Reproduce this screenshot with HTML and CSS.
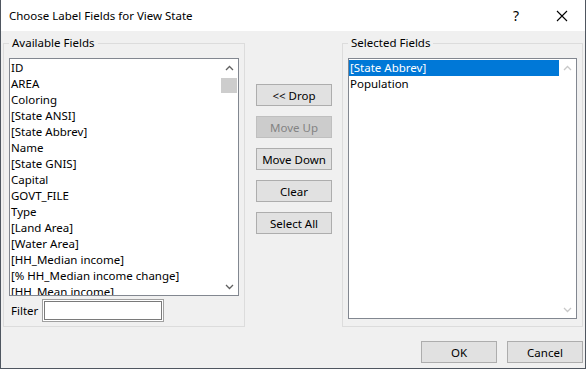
FILE: index.html
```html
<!DOCTYPE html>
<html lang="en">
<head>
    <meta charset="UTF-8">
    <title>Choose Label Fields for View State</title>
    <link rel="stylesheet" href="styles.css">
</head>
<body>
    <div class="dialog">
        <div class="titlebar">
            <span class="title">Choose Label Fields for View State</span>
            <span class="help">?</span>
            <span class="close">
                <svg width="12" height="12" viewBox="0 0 12 12"><path d="M1 1L11 11M11 1L1 11" stroke="#000" stroke-width="1.1" fill="none"/></svg>
            </span>
        </div>

        <div class="body">
            <div class="main">
                <!-- Available fields -->
                <fieldset class="group group-left">
                    <legend>Available Fields</legend>
                    <div class="listbox list-available">
                        <div class="items">
                            <div class="item">ID</div>
                            <div class="item">AREA</div>
                            <div class="item">Coloring</div>
                            <div class="item">[State ANSI]</div>
                            <div class="item">[State Abbrev]</div>
                            <div class="item">Name</div>
                            <div class="item">[State GNIS]</div>
                            <div class="item">Capital</div>
                            <div class="item">GOVT_FILE</div>
                            <div class="item">Type</div>
                            <div class="item">[Land Area]</div>
                            <div class="item">[Water Area]</div>
                            <div class="item">[HH_Median income]</div>
                            <div class="item">[% HH_Median income change]</div>
                            <div class="item">[HH_Mean income]</div>
                        </div>
                        <div class="scrollbar">
                            <div class="arrow"><svg width="9" height="6" viewBox="0 0 9 6"><path d="M1 5L4.5 1.5L8 5" stroke="#606060" stroke-width="1.3" fill="none"/></svg></div>
                            <div class="track"><div class="thumb"></div></div>
                            <div class="arrow"><svg width="9" height="6" viewBox="0 0 9 6"><path d="M1 1L4.5 4.5L8 1" stroke="#606060" stroke-width="1.3" fill="none"/></svg></div>
                        </div>
                    </div>
                    <div class="filter-row">
                        <span class="filter-label">Filter</span>
                        <div class="filter-input"></div>
                    </div>
                </fieldset>

                <!-- Move buttons -->
                <div class="actions">
                    <button class="btn">&lt;&lt; Drop</button>
                    <button class="btn" disabled>Move Up</button>
                    <button class="btn">Move Down</button>
                    <button class="btn">Clear</button>
                    <button class="btn">Select All</button>
                </div>

                <!-- Selected fields -->
                <fieldset class="group group-right">
                    <legend>Selected Fields</legend>
                    <div class="listbox list-selected">
                        <div class="items">
                            <div class="item selected">[State Abbrev]</div>
                            <div class="item">Population</div>
                        </div>
                        <div class="scrollbar disabled">
                            <div class="arrow"><svg width="9" height="6" viewBox="0 0 9 6"><path d="M1 5L4.5 1.5L8 5" stroke="#c8c8c8" stroke-width="1.3" fill="none"/></svg></div>
                            <div class="track"></div>
                            <div class="arrow"><svg width="9" height="6" viewBox="0 0 9 6"><path d="M1 1L4.5 4.5L8 1" stroke="#c8c8c8" stroke-width="1.3" fill="none"/></svg></div>
                        </div>
                    </div>
                </fieldset>
            </div>

            <div class="footer">
                <button class="btn">OK</button>
                <button class="btn">Cancel</button>
            </div>
        </div>
    </div>
</body>
</html>
```

FILE: styles.css
```css
* {
    box-sizing: border-box;
    margin: 0;
    padding: 0;
}

body {
    font-family: 'Noto Sans', 'Open Sans', Arial, sans-serif;
    font-size: 11.5px;
    color: #000;
    background: #f0f0f0;
}

.dialog {
    width: 586px;
    height: 369px;
    border-left: 1px solid #4f5660;
    border-right: 1px solid #4f5660;
    border-bottom: 1px solid #4f5660;
    display: flex;
    flex-direction: column;
}

/* Title bar */
.titlebar {
    height: 31px;
    background: #fff;
    display: flex;
    align-items: center;
    padding-left: 8px;
}

.title {
    flex-grow: 1;
    font-size: 11.5px;
}

.help {
    font-size: 14px;
    width: 46px;
    text-align: center;
}

.close {
    width: 46px;
    height: 31px;
    display: flex;
    align-items: center;
    justify-content: center;
}

.body {
    flex-grow: 1;
    background: #f0f0f0;
    display: flex;
    flex-direction: column;
}

.main {
    display: flex;
    padding-left: 2px;
}

/* Group boxes */
.group {
    border: 1px solid #dcdcdc;
    margin-top: 4px;
    padding: 7px 5px 4px 5px;
    height: 292px;
    min-inline-size: 0;
}

.group legend {
    padding: 0 3px;
    line-height: 16px;
}

.group-left {
    width: 242px;
}

.group-right {
    width: 241px;
    margin-left: 10px;
    padding-bottom: 7px;
    display: flex;
    flex-direction: column;
}

/* List boxes */
.listbox {
    border: 1px solid #828790;
    background: #fff;
    display: flex;
    overflow: hidden;
}

.list-available {
    height: 238px;
}

.list-selected {
    height: 261px;
}

.items {
    flex-grow: 1;
    padding-top: 1px;
    overflow: hidden;
}

.item {
    line-height: 16px;
    height: 16px;
    padding-left: 1px;
    white-space: nowrap;
}

.item.selected {
    background: #0078d7;
    color: #fff;
}

.scrollbar {
    width: 17px;
    display: flex;
    flex-direction: column;
}

.arrow {
    height: 17px;
    display: flex;
    align-items: center;
    justify-content: center;
}

.track {
    flex-grow: 1;
    padding: 2px 1px 0 0;
}

.thumb {
    height: 15px;
    background: #cdcdcd;
}

/* Filter */
.filter-row {
    display: flex;
    align-items: center;
    margin-top: 3px;
}

.filter-label {
    padding-left: 2px;
    width: 33px;
}

.filter-input {
    width: 122px;
    height: 23px;
    background: #fff;
    border: 1px solid #a0a0a0;
    box-shadow: inset 0 0 0 1px #fff, inset 0 0 0 2px #7a7a7a;
}

/* Buttons */
.actions {
    width: 76px;
    margin-left: 11px;
    padding-top: 53px;
    display: flex;
    flex-direction: column;
    gap: 10px;
}

.btn {
    font-family: inherit;
    font-size: 11.5px;
    height: 22px;
    width: 76px;
    background: #e1e1e1;
    border: 1px solid #adadad;
    color: #000;
}

.btn:disabled {
    background: #cccccc;
    border-color: #bfbfbf;
    color: #838383;
}

.footer {
    display: flex;
    justify-content: flex-end;
    gap: 10px;
    padding-top: 14px;
    padding-right: 2px;
}
```
